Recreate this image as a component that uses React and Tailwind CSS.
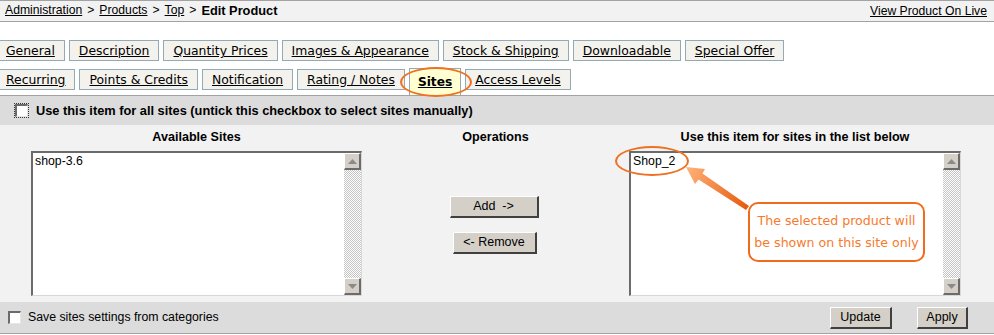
import React from 'react';

const tabsRow1 = ['General', 'Description', 'Quantity Prices', 'Images & Appearance', 'Stock & Shipping', 'Downloadable', 'Special Offer'];
const tabsRow2 = ['Recurring', 'Points & Credits', 'Notification', 'Rating / Notes', 'Sites', 'Access Levels'];

function Tab({ label }) {
  if (label === 'Sites') {
    return (
      <div className="h-[27px] -mt-px px-[8px] pt-[5px] border-x border-t border-[#93a9b5] bg-[#ffffd2] font-['DejaVu_Sans',sans-serif] text-[12.2px] font-bold underline leading-[16px]">
        {label}
      </div>
    );
  }
  return (
    <div className="h-[21px] px-[9px] border border-[#93a9b5] bg-[#f4f2ec] font-['DejaVu_Sans',sans-serif] text-[12.4px] leading-[19px] underline whitespace-nowrap">
      {label}
    </div>
  );
}

function Checkbox() {
  return <div className="w-[13px] h-[13px] bg-white border-t-2 border-l-2 border-b border-r border-t-[#6b6b6b] border-l-[#6b6b6b] border-b-[#e6e6e6] border-r-[#e6e6e6]" />;
}

function WinButton({ children, className }) {
  return (
    <div className={`h-[22px] bg-[#d4d0c8] border-t border-l border-white border-b-2 border-r-2 border-b-[#404040] border-r-[#404040] flex items-center justify-center text-[12.5px] whitespace-pre ${className}`}>
      {children}
    </div>
  );
}

function ScrollArrow({ down }) {
  return (
    <div className="w-[17px] h-[17px] bg-[#d4d0c8] border-t border-l border-white border-b-2 border-r-2 border-b-[#6b6b6b] border-r-[#6b6b6b] flex items-center justify-center">
      <svg width="9" height="5" viewBox="0 0 9 5">
        {down ? <path d="M0 0 H9 L4.5 5 Z" fill="#8a8a8a" /> : <path d="M0 5 H9 L4.5 0 Z" fill="#8a8a8a" />}
      </svg>
    </div>
  );
}

function ListBox({ item }) {
  return (
    <div className="h-[145px] bg-white border-t-2 border-l-2 border-b border-r border-t-[#6b6b6b] border-l-[#6b6b6b] border-b-[#d8d8d8] border-r-[#d8d8d8] flex">
      <div className="flex-1 px-[2px] pt-[1px] text-[12.3px] leading-[14px]">{item}</div>
      <div className="w-[17px] flex flex-col bg-[image:repeating-conic-gradient(#c4c4c4_0_25%,#ffffff_0_50%)] bg-size-[2px_2px]">
        <ScrollArrow />
        <div className="flex-1" />
        <ScrollArrow down />
      </div>
    </div>
  );
}

export default function App() {
  return (
    <div className="relative w-[994px] h-[335px] overflow-hidden bg-white text-black font-['Liberation_Sans',Arial,sans-serif]">
      {/* breadcrumb bar */}
      <div className="h-[22px] border-y border-[#a3a3a3] bg-[#f2f2f2] flex items-center justify-between pl-[5px] pr-[7px] text-[12.2px]">
        <div className="flex">
          <span className="underline">Administration</span>
          <span className="mx-[5px]">&gt;</span>
          <span className="underline">Products</span>
          <span className="mx-[5px]">&gt;</span>
          <span className="underline">Top</span>
          <span className="mx-[5px]">&gt;</span>
          <span className="font-bold text-[12.8px]">Edit Product</span>
        </div>
        <span className="underline">View Product On Live</span>
      </div>

      {/* tabs */}
      <div className="pt-[18px] pb-[5px] -ml-[4px] flex flex-col gap-[8px]">
        <div className="flex gap-[4px]">
          {tabsRow1.map((t) => <Tab key={t} label={t} />)}
        </div>
        <div className="flex items-start gap-[4px] h-[21px]">
          {tabsRow2.map((t) => <Tab key={t} label={t} />)}
        </div>
      </div>

      {/* use for all sites */}
      <div className="h-[30px] border-t border-[#a3a3a3] bg-[#dcdcdc] flex items-center pl-[15px] gap-[8px]">
        <div className="outline-1 outline-dotted outline-[#333] outline-offset-0">
          <Checkbox />
        </div>
        <span className="text-[12.8px] font-bold">Use this item for all sites (untick this checkbox to select sites manually)</span>
      </div>

      {/* sites panel */}
      <div className="bg-[#f2f2f2] pt-[4px] pb-[6px] pl-[31px] pr-[33px] grid grid-cols-[331px_1fr_332px]">
        <div className="h-[16px] leading-[16px] text-center text-[12.6px] font-bold mb-[6px]">Available Sites</div>
        <div className="h-[16px] leading-[16px] text-center text-[12.6px] font-bold mb-[6px]">Operations</div>
        <div className="h-[16px] leading-[16px] text-center text-[12.6px] font-bold mb-[6px]">Use this item for sites in the list below</div>
        <ListBox item="shop-3.6" />
        <div className="flex flex-col items-center pt-[45px] gap-[14px]">
          <WinButton className="w-[89px] -ml-[3px]">Add  -&gt;</WinButton>
          <WinButton className="w-[84px] -ml-[2px]">&lt;- Remove</WinButton>
        </div>
        <ListBox item="Shop_2" />
      </div>

      {/* bottom bar */}
      <div className="h-[32px] border-b border-[#a3a3a3] bg-[#dcdcdc] flex items-center pl-[8px] pr-[26px]">
        <Checkbox />
        <span className="ml-[7px] text-[12.3px]">Save sites settings from categories</span>
        <div className="ml-auto flex gap-[25px]">
          <WinButton className="w-[62px]">Update</WinButton>
          <WinButton className="w-[51px]">Apply</WinButton>
        </div>
      </div>

      {/* annotations */}
      <div className="absolute left-[400px] top-[67px] w-[72px] h-[30px] rounded-[50%] border-2 border-[#f07022]" />
      <div className="absolute left-[615px] top-[146px] w-[74px] h-[30px] rounded-[50%] border-2 border-[#f07022]" />
      <svg className="absolute left-0 top-0" width="994" height="335" viewBox="0 0 994 335">
        <defs>
          <linearGradient id="arr" x1="748" y1="208" x2="686" y2="168" gradientUnits="userSpaceOnUse">
            <stop offset="0" stopColor="#e55a0c" />
            <stop offset="1" stopColor="#ffb27a" />
          </linearGradient>
        </defs>
        <path d="M749 206 L702.5 173.5 L705 169 L686 167 L695 184 L698.5 179.5 L746 210 Z" fill="url(#arr)" />
      </svg>
      <div className="absolute left-[748px] top-[202px] w-[177px] h-[60px] rounded-[10px] border-2 border-[#f26a1b] bg-white flex flex-col items-center justify-center font-['DejaVu_Sans',sans-serif] text-[12.6px] leading-[22px] text-[#f77a2c]">
        <span>The selected product will</span>
        <span>be shown on this site only</span>
      </div>
    </div>
  );
}
